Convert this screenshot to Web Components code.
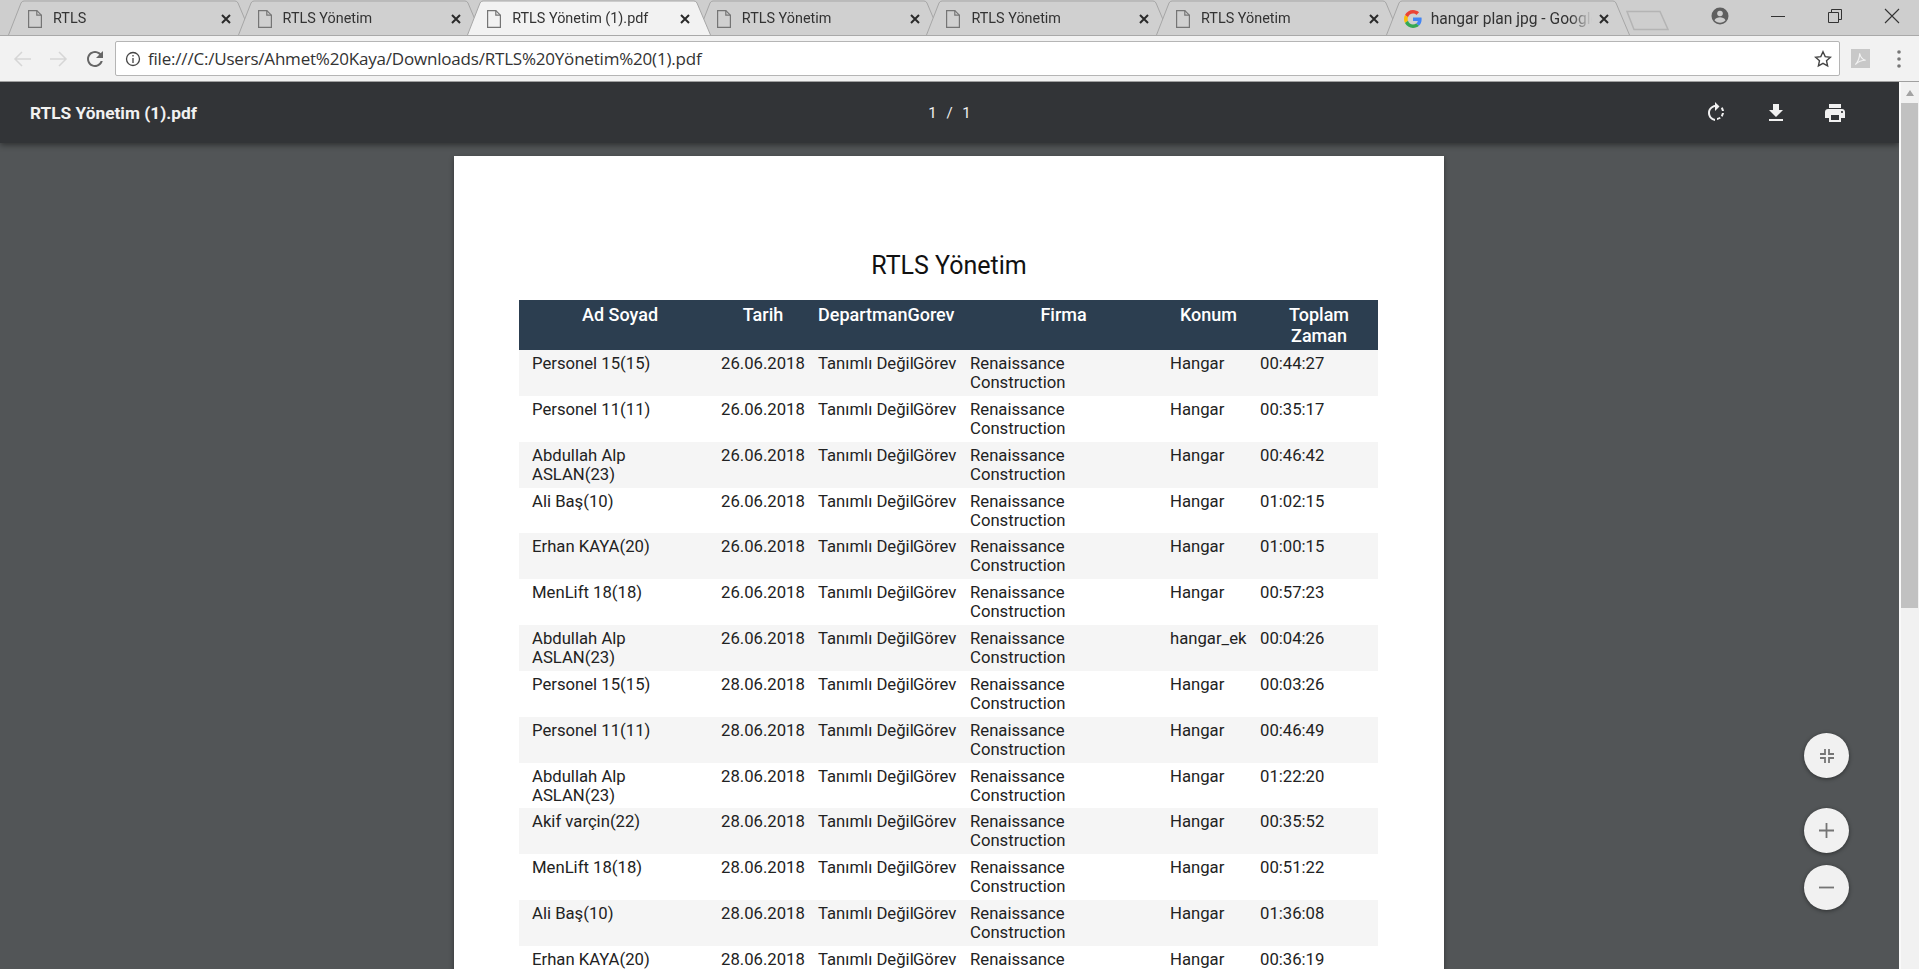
<!DOCTYPE html>
<html lang="tr">
<head>
<meta charset="utf-8">
<title>RTLS Yönetim (1).pdf</title>
<style>
	html, body { margin: 0; height: 100%; overflow: hidden; }
	body { display: flex; flex-direction: column; height: 969px; font-family: Roboto, sans-serif; }
</style>
</head>
<body>
<tab-strip>
	<browser-tab>RTLS</browser-tab>
	<browser-tab>RTLS Yönetim</browser-tab>
	<browser-tab active>RTLS Yönetim (1).pdf</browser-tab>
	<browser-tab>RTLS Yönetim</browser-tab>
	<browser-tab>RTLS Yönetim</browser-tab>
	<browser-tab>RTLS Yönetim</browser-tab>
	<browser-tab google>hangar plan jpg - Google</browser-tab>
</tab-strip>
<address-bar>file:///C:/Users/Ahmet%20Kaya/Downloads/RTLS%20Yönetim%20(1).pdf</address-bar>
<pdf-viewer>
	<pdf-toolbar name="RTLS Yönetim (1).pdf"></pdf-toolbar>
	<pdf-page heading="RTLS Yönetim"></pdf-page>
	<zoom-controls></zoom-controls>
</pdf-viewer>

<script>
const DOC_ICON = `<svg width="14" height="18" viewBox="0 0 14 18" fill="none" stroke="#757575" stroke-width="1.200"><path d="M.6 .6h8.200l4.600 4.600v12.200H.6z"/><path d="M8.800 .6v4.600h4.600"/></svg>`;
const G_ICON = `<svg width="18" height="18" viewBox="0 0 48 48"><path fill="#EA4335" d="M24 9.500c3.500 0 6.700 1.200 9.200 3.600l6.900-6.900C35.900 2.400 30.400 0 24 0 14.600 0 6.500 5.400 2.600 13.200l8 6.200C12.500 13.700 17.800 9.500 24 9.500z"/><path fill="#4285F4" d="M47 24.500c0-1.600-.1-3.100-.4-4.500H24v9h13c-.6 3-2.300 5.500-4.800 7.200l7.700 6C44.400 37.900 47 31.800 47 24.500z"/><path fill="#FBBC05" d="M10.600 28.600c-.5-1.400-.8-3-.8-4.600s.3-3.200.8-4.600l-8-6.200C.9 16.400 0 20.100 0 24s.9 7.600 2.600 10.800z"/><path fill="#34A853" d="M24 48c6.500 0 11.900-2.100 15.900-5.800l-7.700-6c-2.200 1.400-4.900 2.300-8.200 2.300-6.200 0-11.500-4.200-13.400-9.900l-8 6.200C6.500 42.600 14.600 48 24 48z"/></svg>`;

class BrowserTab extends HTMLElement {
	constructor() {
		super();
		this.attachShadow({ mode: "open" });
		const active = this.hasAttribute("active");
		const google = this.hasAttribute("google");
		const fill = active ? "#f2f2f2" : "#d0d0d0";
		this.shadowRoot.innerHTML = `
			<style>
				:host { display: flex; align-items: center; box-sizing: border-box; position: relative; width: 244px; height: 35px; margin-right: -14.400px; padding: 2px 20px 0 18px; font-size: ${google ? "15.600px" : "14.400px"}; color: #333; z-index: ${active ? 2 : 1}; }
				svg.bg { position: absolute; inset: 0; width: 100%; height: 100%; z-index: -1; }
				.icon { display: flex; width: 18px; justify-content: center; margin-right: 9px; flex: none; }
				.title { flex: 1; overflow: hidden; white-space: nowrap; -webkit-mask-image: linear-gradient(to left, transparent, #000 22px); mask-image: linear-gradient(to left, transparent, #000 22px); }
				.close { flex: none; width: 12px; margin-left: 6px; }
			</style>
			<svg class="bg" viewBox="0 0 244 35" preserveAspectRatio="none">
				<path d="M0.500 35 L13 3 Q14 1 16 1 H227 Q229 1 230 3 L243.500 35" fill="${fill}" stroke="#a6a6a6"/>
			</svg>
			<span class="icon">${google ? G_ICON : DOC_ICON}</span>
			<span class="title"><slot></slot></span>
			<svg class="close" width="12" height="12" viewBox="0 0 12 12" stroke="#2a2a2a" stroke-width="2"><path d="M2 2l8 8M10 2l-8 8"/></svg>
		`;
	}
}
customElements.define("browser-tab", BrowserTab);

class TabStrip extends HTMLElement {
	constructor() {
		super();
		this.attachShadow({ mode: "open" });
		this.shadowRoot.innerHTML = `
			<style>
				:host { display: flex; align-items: flex-start; flex: none; box-sizing: border-box; height: 36px; padding-left: 8px; background: #cecece; border-bottom: 1px solid #a9a9a9; }
				.tabs { display: flex; height: 35px; }
				.new { width: 44px; height: 22px; margin: 9px 0 0 11px; flex: none; }
				.caption { display: flex; align-items: center; height: 35px; margin: 0 -1px 0 auto; }
				.caption svg { display: block; }
				.profile { margin-right: 20px; margin-top: -3px; }
				.btn { width: 57px; display: flex; justify-content: center; margin-top: -4px; }
			</style>
			<div class="tabs"><slot></slot></div>
			<svg class="new" viewBox="0 0 44 22" fill="none" stroke="#b4b4b4" stroke-width="1.500"><path d="M1 2.500 H34 L42 20.500 H8z"/></svg>
			<div class="caption">
				<svg class="profile" width="18" height="18" viewBox="0 0 18 18"><circle cx="9" cy="9" r="8.500" fill="#5f5f5f"/><circle cx="9" cy="6.500" r="2.800" fill="#cecece"/><path d="M3.500 13.200c1-2.300 3.300-3 5.500-3s4.500.7 5.500 3c-1.200 1.500-3.200 2.500-5.500 2.500s-4.300-1-5.500-2.500z" fill="#cecece"/></svg>
				<span class="btn"><svg width="14" height="14" viewBox="0 0 14 14" stroke="#333"><path d="M0 7.500h14"/></svg></span>
				<span class="btn"><svg width="14" height="14" viewBox="0 0 14 14" fill="none" stroke="#333"><path d="M.5 3.500h10v10H.5zM3.500 3.500V.5h10v10h-3"/></svg></span>
				<span class="btn"><svg width="16" height="16" viewBox="0 0 16 16" stroke="#333" stroke-width="1.100"><path d="M1 1l14 14M15 1L1 15"/></svg></span>
			</div>
		`;
	}
}
customElements.define("tab-strip", TabStrip);

class AddressBar extends HTMLElement {
	constructor() {
		super();
		this.attachShadow({ mode: "open" });
		this.shadowRoot.innerHTML = `
			<style>
				:host { display: flex; align-items: center; flex: none; box-sizing: border-box; height: 46px; padding: 0 18px 0 13px; background: #f2f2f2; border-bottom: 1px solid #a0a0a0; }
				.nav { display: flex; align-items: center; gap: 15px; width: 102px; flex: none; }
				.box { display: flex; align-items: center; flex: 1; height: 35px; box-sizing: border-box; background: #fff; border: 1px solid #b5b5b5; border-radius: 2px; padding: 0 7px 0 9px; font: 17px "Open Sans", Roboto, sans-serif; letter-spacing: -.2px; color: #333; }
				.url { flex: 1; margin-left: 7px; white-space: nowrap; }
				.ext { margin-left: 11px; flex: none; }
				.menu { margin-left: 27px; flex: none; }
			</style>
			<div class="nav">
				<svg width="20" height="20" viewBox="0 0 20 20" fill="none" stroke="#d6d6d6" stroke-width="1.500"><path d="M18 10H2M9 3l-7 7 7 7"/></svg>
				<svg width="20" height="20" viewBox="0 0 20 20" fill="none" stroke="#d6d6d6" stroke-width="1.500"><path d="M2 10h16M11 3l7 7-7 7"/></svg>
				<svg width="24" height="24" viewBox="0 0 24 24" fill="#666"><path d="M17.650 6.350C16.200 4.900 14.210 4 12 4c-4.420 0-7.990 3.580-7.990 8s3.570 8 7.990 8c3.730 0 6.840-2.550 7.730-6h-2.080c-.82 2.330-3.040 4-5.650 4-3.310 0-6-2.690-6-6s2.690-6 6-6c1.660 0 3.140.69 4.220 1.780L13 11h7V4l-2.350 2.350z"/></svg>
			</div>
			<div class="box">
				<svg width="16" height="16" viewBox="0 0 16 16" fill="none" stroke="#444" stroke-width="1.300"><circle cx="8" cy="8" r="6.500"/><path d="M8 7v5M8 4v1.600"/></svg>
				<span class="url"><slot></slot></span>
				<svg width="18" height="18" viewBox="0 0 18 18" fill="none" stroke="#444" stroke-width="1.400"><path d="M9 1.800l2.200 4.800 5.200.6-3.900 3.500 1.100 5.200L9 13.300l-4.600 2.600 1.100-5.200L1.600 7.200l5.200-.6z"/></svg>
			</div>
			<svg class="ext" width="19" height="19" viewBox="0 0 22 22"><rect width="22" height="22" fill="#c8c8c8"/><path d="M5 18c3-3 5-7 5-13 1 5 3 7 7 8-4 0-8 1-12 5z" fill="none" stroke="#f2f2f2" stroke-width="1.300"/></svg>
			<svg class="menu" width="4" height="18" viewBox="0 0 4 18" fill="#777"><circle cx="2" cy="2" r="1.800"/><circle cx="2" cy="9" r="1.800"/><circle cx="2" cy="16" r="1.800"/></svg>
		`;
	}
}
customElements.define("address-bar", AddressBar);

class PdfViewer extends HTMLElement {
	constructor() {
		super();
		this.attachShadow({ mode: "open" });
		this.shadowRoot.innerHTML = `
			<style>
				:host { display: grid; grid-template-columns: 1fr 20px; grid-template-rows: 1fr; flex: 1; min-height: 0; overflow: hidden; position: relative; background: #525557; }
				.main { display: flex; flex-direction: column; min-width: 0; overflow: hidden; }
				.bar { background: #f1f1f1; display: flex; flex-direction: column; align-items: flex-end; padding-right: 1px; border-left: 2px solid #f9f9f9; }
				.arrow { width: 0; height: 0; margin: 8px 4px 7px 0; border: 4.500px solid transparent; border-top: 0; border-bottom: 6px solid #a3a3a3; }
				.thumb { width: 17px; height: 505px; background: #c1c1c1; }
			</style>
			<div class="main"><slot></slot></div>
			<div class="bar"><span class="arrow"></span><span class="thumb"></span></div>
		`;
	}
}
customElements.define("pdf-viewer", PdfViewer);

class PdfToolbar extends HTMLElement {
	constructor() {
		super();
		this.attachShadow({ mode: "open" });
		const name = this.getAttribute("name");
		this.shadowRoot.innerHTML = `
			<style>
				:host { display: grid; grid-template-columns: 1fr auto 1fr; align-items: center; flex: none; height: 61px; background: #323437; color: #f1f1f1; box-shadow: 0 2px 6px rgba(0,0,0,.45); position: relative; z-index: 2; }
				.name { font-size: 17.300px; font-weight: 700; padding-left: 30px; }
				.pages { font-size: 15px; word-spacing: 6px; }
				.actions { display: flex; justify-content: flex-end; align-items: center; gap: 35.500px; padding-right: 52px; }
				svg { fill: #f1f1f1; display: block; }
			</style>
			<span class="name">${name}</span>
			<span class="pages">1 / 1</span>
			<div class="actions">
				<svg width="24" height="24" viewBox="0 0 24 24"><path d="M7.100 7.500 5.700 6.100C4.800 7.200 4.200 8.500 4 10h2c.2-.9.600-1.800 1.100-2.500zM6 12H4c.2 1.500.8 2.800 1.700 3.900l1.400-1.400C6.600 13.800 6.200 12.900 6 12zM7.100 17.300c1.200.9 2.500 1.400 3.900 1.600v-2c-.9-.1-1.700-.5-2.500-1zM13 4.100V1L8.500 5.500 13 10V6.100c2.800.5 5 2.900 5 5.900s-2.200 5.400-5 5.900v2c3.900-.5 7-3.900 7-7.900s-3.100-7.400-7-7.900z" transform="matrix(-1 0 0 1 24 0)"/></svg>
				<svg width="24" height="24" viewBox="0 0 24 24"><path d="M19 9h-4V3H9v6H5l7 7 7-7zM5 18v2h14v-2H5z"/></svg>
				<svg width="24" height="24" viewBox="0 0 24 24"><path d="M19 8H5c-1.700 0-3 1.300-3 3v6h4v4h12v-4h4v-6c0-1.700-1.300-3-3-3zm-3 11H8v-5h8v5zm3-7c-.6 0-1-.4-1-1s.4-1 1-1 1 .4 1 1-.4 1-1 1zm-1-9H6v4h12V3z"/></svg>
			</div>
		`;
	}
}
customElements.define("pdf-toolbar", PdfToolbar);

const ROWS = [
	["Personel 15(15)", "26.06.2018", "00:44:27"],
	["Personel 11(11)", "26.06.2018", "00:35:17"],
	["Abdullah Alp ASLAN(23)", "26.06.2018", "00:46:42"],
	["Ali Baş(10)", "26.06.2018", "01:02:15"],
	["Erhan KAYA(20)", "26.06.2018", "01:00:15"],
	["MenLift 18(18)", "26.06.2018", "00:57:23"],
	["Abdullah Alp ASLAN(23)", "26.06.2018", "00:04:26", "hangar_ek"],
	["Personel 15(15)", "28.06.2018", "00:03:26"],
	["Personel 11(11)", "28.06.2018", "00:46:49"],
	["Abdullah Alp ASLAN(23)", "28.06.2018", "01:22:20"],
	["Akif varçin(22)", "28.06.2018", "00:35:52"],
	["MenLift 18(18)", "28.06.2018", "00:51:22"],
	["Ali Baş(10)", "28.06.2018", "01:36:08"],
	["Erhan KAYA(20)", "28.06.2018", "00:36:19"],
];

class PdfPage extends HTMLElement {
	constructor() {
		super();
		this.attachShadow({ mode: "open" });
		const heading = this.getAttribute("heading");
		const rows = ROWS.map(([name, date, time, place]) => `
			<tr>
				<td>${name}</td><td class="nw">${date}</td><td class="nw">Tanımlı Değil</td><td class="nw tight">Görev</td>
				<td>Renaissance Construction</td><td class="nw">${place || "Hangar"}</td><td>${time}</td>
			</tr>`).join("");
		this.shadowRoot.innerHTML = `
			<style>
				:host { display: block; box-sizing: border-box; flex: none; width: 990px; margin: 13px auto 0 454px; padding: 91px 65px 0; background: #fff; color: #222; box-shadow: 0 2px 5px rgba(0,0,0,.4); }
				h1 { margin: 0 0 15px; font-size: 25px; line-height: 38px; font-weight: 400; text-align: center; color: #111; }
				table { width: 859px; border-collapse: collapse; table-layout: fixed; font-size: 16.700px; line-height: 19px; }
				th { background: #2c3e50; color: #fff; font-weight: 500; font-size: 18px; line-height: 21px; padding: 4px 0 4px 13px; text-align: center; vertical-align: top; height: 42px; }
				th.left { text-align: left; white-space: nowrap; }
				td { padding: 4px 0 3.850px 13px; vertical-align: top; height: 38px; }
				td.nw { white-space: nowrap; }
				td.tight { padding-left: 0; }
				tbody tr:nth-child(odd) { background: #f5f5f5; }
			</style>
			<h1>${heading}</h1>
			<table>
				<colgroup>
					<col style="width:189px"><col style="width:97px"><col style="width:108px"><col style="width:44px">
					<col style="width:200px"><col style="width:90px"><col style="width:131px">
				</colgroup>
				<thead>
					<tr><th>Ad Soyad</th><th>Tarih</th><th class="left" colspan="2">DepartmanGorev</th><th>Firma</th><th>Konum</th><th>Toplam Zaman</th></tr>
				</thead>
				<tbody>${rows}</tbody>
			</table>
		`;
	}
}
customElements.define("pdf-page", PdfPage);

class ZoomControls extends HTMLElement {
	constructor() {
		super();
		this.attachShadow({ mode: "open" });
		this.shadowRoot.innerHTML = `
			<style>
				:host { position: absolute; right: 70px; bottom: 59px; display: flex; flex-direction: column; gap: 12px; z-index: 3; }
				button { width: 45px; height: 45px; padding: 0; border: 0; border-radius: 50%; background: #f1f1f1; box-shadow: 0 1px 4px rgba(0,0,0,.45); display: flex; align-items: center; justify-content: center; }
				button.fit { margin-bottom: 18px; }
				svg { stroke: #757575; fill: none; stroke-width: 1.800; }
			</style>
			<button class="fit"><svg width="16" height="16" viewBox="0 0 16 16"><path d="M6 1v5H1M10 1v5h5M6 15v-5H1M10 15v-5h5"/></svg></button>
			<button><svg width="15" height="15" viewBox="0 0 15 15"><path d="M7.500 0v15M0 7.500h15"/></svg></button>
			<button><svg width="15" height="15" viewBox="0 0 15 15"><path d="M0 7.500h15"/></svg></button>
		`;
	}
}
customElements.define("zoom-controls", ZoomControls);
</script>
</body>
</html>
